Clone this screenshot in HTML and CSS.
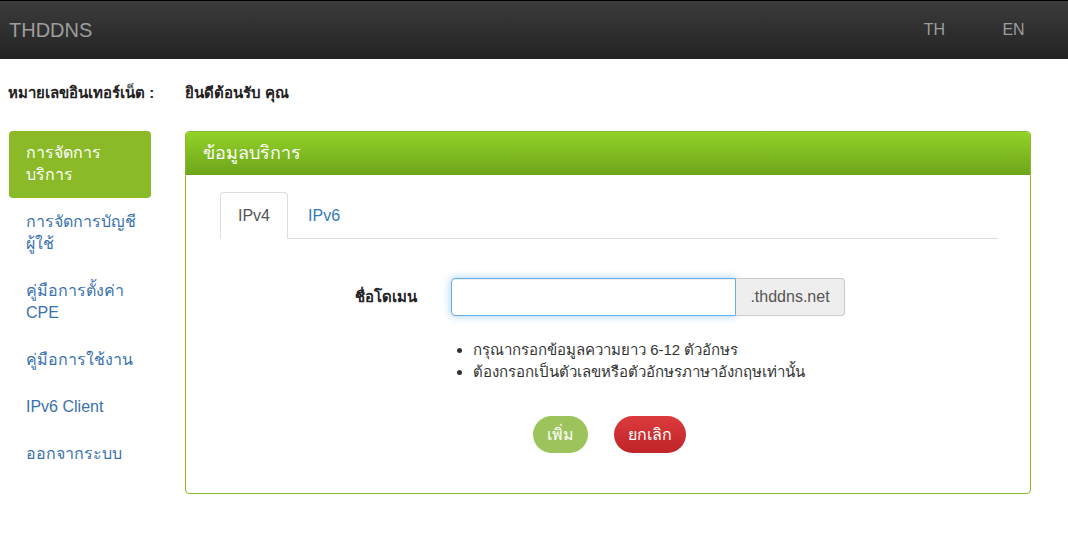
FILE: index.html
```html
<!DOCTYPE html>
<html lang="th">
<head>
    <meta charset="UTF-8">
    <title>THDDNS</title>
    <link rel="stylesheet" href="styles.css">
</head>
<body>

    <!-- Top bar -->
    <div class="navbar">
        <a class="brand" href="#">THDDNS</a>
        <div class="lang">
            <a href="#">TH</a>
            <a href="#">EN</a>
        </div>
    </div>

    <div class="page">
        <div class="account-label">หมายเลขอินเทอร์เน็ต :</div>
        <div class="welcome">ยินดีต้อนรับ คุณ</div>

        <!-- Side menu -->
        <ul class="side-menu">
            <li class="active"><a href="#">การจัดการ<br>บริการ</a></li>
            <li><a href="#">การจัดการบัญชี<br>ผู้ใช้</a></li>
            <li><a href="#">คู่มือการตั้งค่า<br>CPE</a></li>
            <li><a href="#">คู่มือการใช้งาน</a></li>
            <li><a href="#">IPv6 Client</a></li>
            <li><a href="#">ออกจากระบบ</a></li>
        </ul>

        <!-- Service panel -->
        <div class="panel">
            <div class="panel-heading">ข้อมูลบริการ</div>
            <div class="panel-body">
                <ul class="tabs">
                    <li class="active"><a href="#">IPv4</a></li>
                    <li><a href="#">IPv6</a></li>
                </ul>

                <div class="form-row">
                    <label for="domain">ชื่อโดเมน</label>
                    <div class="input-group">
                        <input type="text" id="domain">
                        <span class="addon">.thddns.net</span>
                    </div>
                </div>

                <ul class="notes">
                    <li>กรุณากรอกข้อมูลความยาว 6-12 ตัวอักษร</li>
                    <li>ต้องกรอกเป็นตัวเลขหรือตัวอักษรภาษาอังกฤษเท่านั้น</li>
                </ul>

                <div class="buttons">
                    <button type="button" class="btn-add">เพิ่ม</button>
                    <button type="button" class="btn-cancel">ยกเลิก</button>
                </div>
            </div>
        </div>
    </div>

</body>
</html>
```

FILE: styles.css
```css
* {
    box-sizing: border-box;
}

body {
    margin: 0;
    background: #fff;
    color: #333;
    font-family: "Liberation Sans", "Noto Sans", sans-serif;
    font-size: 16px;
    line-height: 22px;
}

a {
    text-decoration: none;
}

.navbar {
    height: 59px;
    border-top: 1px solid #000;
    background: linear-gradient(to bottom, #3c3c3c, #222);
    display: flex;
    align-items: center;
    justify-content: space-between;
    padding: 0 15px 0 9px;
}

.brand {
    color: #9d9d9d;
    font-size: 20px;
}

.lang {
    display: flex;
}

.lang a {
    width: 79px;
    text-align: center;
    color: #9d9d9d;
}

.page {
    display: grid;
    grid-template-columns: 142px 846px;
    column-gap: 34px;
    padding: 0 9px;
}

.account-label,
.welcome {
    padding-top: 23px;
    font-size: 15px;
    font-weight: bold;
    color: #222;
}

.account-label {
    margin-left: -1px;
    white-space: nowrap;
}

.side-menu {
    list-style: none;
    margin: 27px 0 0;
    padding: 0;
}

.side-menu li a {
    display: block;
    padding: 12px 17px;
    border-radius: 4px;
    color: #3a72ad;
    white-space: nowrap;
}

.side-menu li + li a {
    padding-top: 13px;
}

.side-menu li.active a {
    background: #8aba27;
    color: #fff;
    padding-top: 11px;
    padding-bottom: 12px;
}

.panel {
    margin-top: 27px;
    border: 1px solid #8ab82e;
    border-radius: 4px;
    height: 363px;
}

.panel-heading {
    height: 43px;
    line-height: 43px;
    padding: 0 17px;
    color: #fff;
    font-size: 18px;
    border-radius: 3px 3px 0 0;
    background: linear-gradient(to bottom, #92d227, #6da51b);
}

.panel-body {
    padding: 17px 32px 40px 34px;
}

.tabs {
    list-style: none;
    margin: 0;
    padding: 0;
    display: flex;
    border-bottom: 1px solid #ddd;
}

.tabs li {
    margin: 0 2px -1px 0;
}

.tabs li a {
    display: block;
    padding: 12px 17px 11px;
    border: 1px solid transparent;
    border-radius: 4px 4px 0 0;
    color: #337ab7;
}

.tabs li.active a {
    color: #555;
    border-color: #ddd #ddd transparent;
    background: #fff;
}

.form-row {
    display: flex;
    align-items: center;
    margin-top: 39px;
}

.form-row label {
    width: 197px;
    margin-right: 34px;
    text-align: right;
    font-weight: bold;
    font-size: 15px;
    color: #222;
}

.input-group {
    display: flex;
    width: 394px;
    height: 38px;
}

.input-group input {
    flex: 1;
    height: 38px;
    border: 1px solid #66afe9;
    border-radius: 4px 0 0 4px;
    box-shadow: inset 0 1px 1px rgba(0, 0, 0, 0.075), 0 0 8px rgba(102, 175, 233, 0.6);
    outline: none;
    padding: 6px 12px;
    font-size: 16px;
}

.addon {
    width: 109px;
    background: #eee;
    border: 1px solid #ccc;
    border-left: none;
    border-radius: 0 4px 4px 0;
    color: #555;
    text-align: center;
    line-height: 36px;
}

.notes {
    margin: 23px 0 0 253px;
    padding: 0;
    font-size: 15px;
    color: #333;
}

.buttons {
    display: flex;
    justify-content: center;
    gap: 26px;
    margin-top: 33px;
}

.buttons button {
    height: 37px;
    border: none;
    border-radius: 19px;
    padding: 0 14px;
    color: #fff;
    font-family: inherit;
    font-size: 16px;
    cursor: pointer;
}

.btn-add {
    background: #9dc45c;
}

.btn-cancel {
    background: linear-gradient(to bottom, #dc3b3d, #bf2428);
    padding: 0 15px;
}
```
